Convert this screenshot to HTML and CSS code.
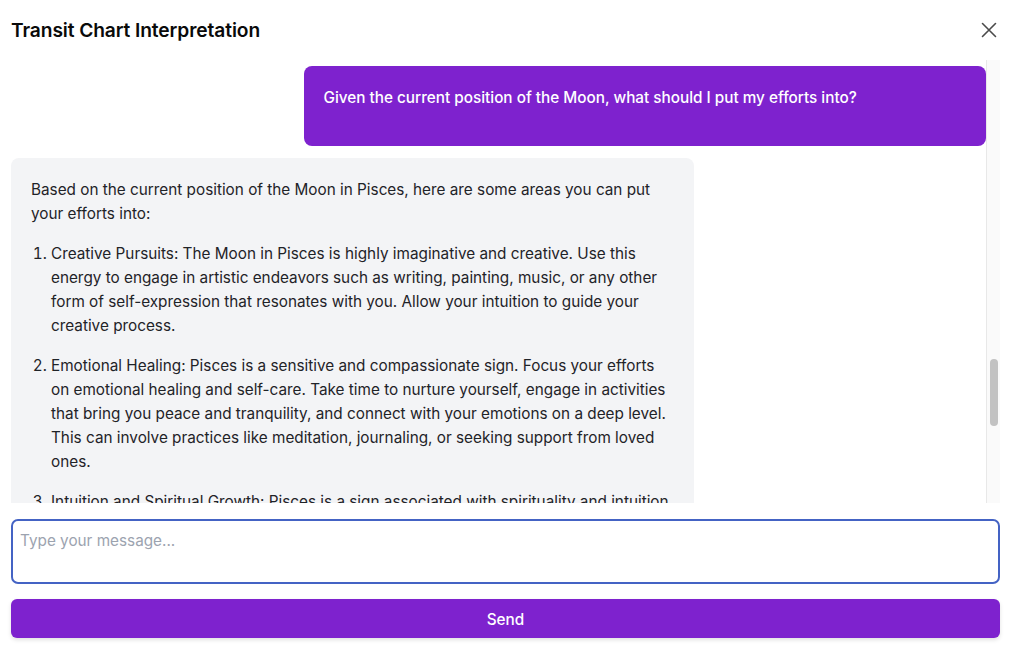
FILE: index.html
```html
<!DOCTYPE html>
<html lang="en">
<head>
<meta charset="utf-8">
<title>Transit Chart Interpretation</title>
<link rel="stylesheet" href="styles.css">
</head>
<body>
<div class="modal">
  <header class="modal-header">
    <h1 class="modal-title">Transit Chart Interpretation</h1>
    <button class="close-btn" aria-label="Close">
      <svg width="16" height="16" viewBox="0 0 16 16" fill="none" stroke="#4b4b4b" stroke-width="1.6" stroke-linecap="round"><path d="M1.5 1.5 L14.5 14.5 M14.5 1.5 L1.5 14.5"/></svg>
    </button>
  </header>
  <div class="chat">
    <div class="messages">
      <div class="msg msg-user">
        <p>Given the current position of the Moon, what should I put my efforts into?</p>
      </div>
      <div class="msg msg-bot">
        <p>Based on the current position of the Moon in Pisces, here are some areas you can put your efforts into:</p>
        <ol>
          <li>Creative Pursuits: The Moon in Pisces is highly imaginative and creative. Use this energy to engage in artistic endeavors such as writing, painting, music, or any other form of self-expression that resonates with you. Allow your intuition to guide your creative process.</li>
          <li>Emotional Healing: Pisces is a sensitive and compassionate sign. Focus your efforts on emotional healing and self-care. Take time to nurture yourself, engage in activities that bring you peace and tranquility, and connect with your emotions on a deep level. This can involve practices like meditation, journaling, or seeking support from loved ones.</li>
          <li>Intuition and Spiritual Growth: Pisces is a sign associated with spirituality and intuition. Pay attention to your dreams, hunches and inner guidance, and consider practices that deepen your spiritual connection.</li>
          <li>Compassion and Service: Channel the empathetic energy of the Moon in Pisces into helping others, whether through volunteering, listening to a friend, or small acts of kindness.</li>
        </ol>
      </div>
    </div>
    <div class="scrollbar"><div class="thumb"></div></div>
  </div>
  <textarea class="input" placeholder="Type your message..." autofocus></textarea>
  <button class="send-btn">Send</button>
</div>
</body>
</html>
```
FILE: styles.css
```css
* { box-sizing: border-box; }
html, body { margin: 0; padding: 0; background: #ffffff; }
body {
  font-family: Inter, "Noto Sans", "Liberation Sans", sans-serif;
  color: #1f2328;
  font-size: 16px;
  line-height: 24px;
}
.modal {
  display: flex;
  flex-direction: column;
  height: 652px;
  padding: 0 14px 14px 11px;
}
.modal-header {
  height: 60px;
  display: flex;
  align-items: center;
  justify-content: space-between;
}
.modal-title {
  margin: 0;
  font-size: 19.2px;
  font-weight: 600;
  color: #0a0a0a;
  letter-spacing: -0.1px;
}
.close-btn {
  border: 0;
  background: none;
  padding: 0;
  width: 16px;
  height: 16px;
  margin-right: 3px;
  display: flex;
}
.chat {
  height: 443px;
  display: flex;
  overflow: hidden;
}
.messages {
  flex: 1;
  overflow: hidden;
  padding-top: 6px;
  display: flex;
  flex-direction: column;
  gap: 12px;
}
.msg {
  max-width: 70%;
  border-radius: 8px;
  padding: 20px;
  font-size: 15.3px;
}
.msg p { margin: 0 0 16px; }
.msg-user {
  align-self: flex-end;
  width: 70%;
  background: #7e22ce;
  color: #ffffff;
  font-weight: 500;
}
.msg-bot {
  align-self: flex-start;
  width: 70%;
  background: #f3f4f6;
  color: #1f2328;
  flex-shrink: 0;
}
.msg-bot ol {
  margin: 0;
  padding-left: 20px;
}
.msg-bot li { margin-bottom: 16px; }
.scrollbar {
  width: 14px;
  flex-shrink: 0;
  background: #fafafa;
  border-left: 1px solid #e8e8e8;
  padding: 299px 2px 0 3px;
}
.thumb {
  height: 67px;
  border-radius: 4px;
  background: #c2c2c2;
}
.input {
  margin-top: 16px;
  height: 65px;
  width: 100%;
  resize: none;
  border: 2px solid #4463c4;
  border-radius: 7px;
  padding: 8px 7px;
  font-family: inherit;
  font-size: 15.3px;
  line-height: 24px;
  color: #1f2328;
  outline: none;
}
.input::placeholder { color: #9ca3af; }
.send-btn {
  margin-top: 15px;
  height: 39px;
  width: 100%;
  border: 0;
  border-radius: 6px;
  background: #7e22ce;
  color: #ffffff;
  font-family: inherit;
  font-size: 15.3px;
  font-weight: 500;
  line-height: 24px;
  padding: 9px 0 6px;
  box-shadow: 0 2px 4px rgba(0,0,0,0.12);
}
```
